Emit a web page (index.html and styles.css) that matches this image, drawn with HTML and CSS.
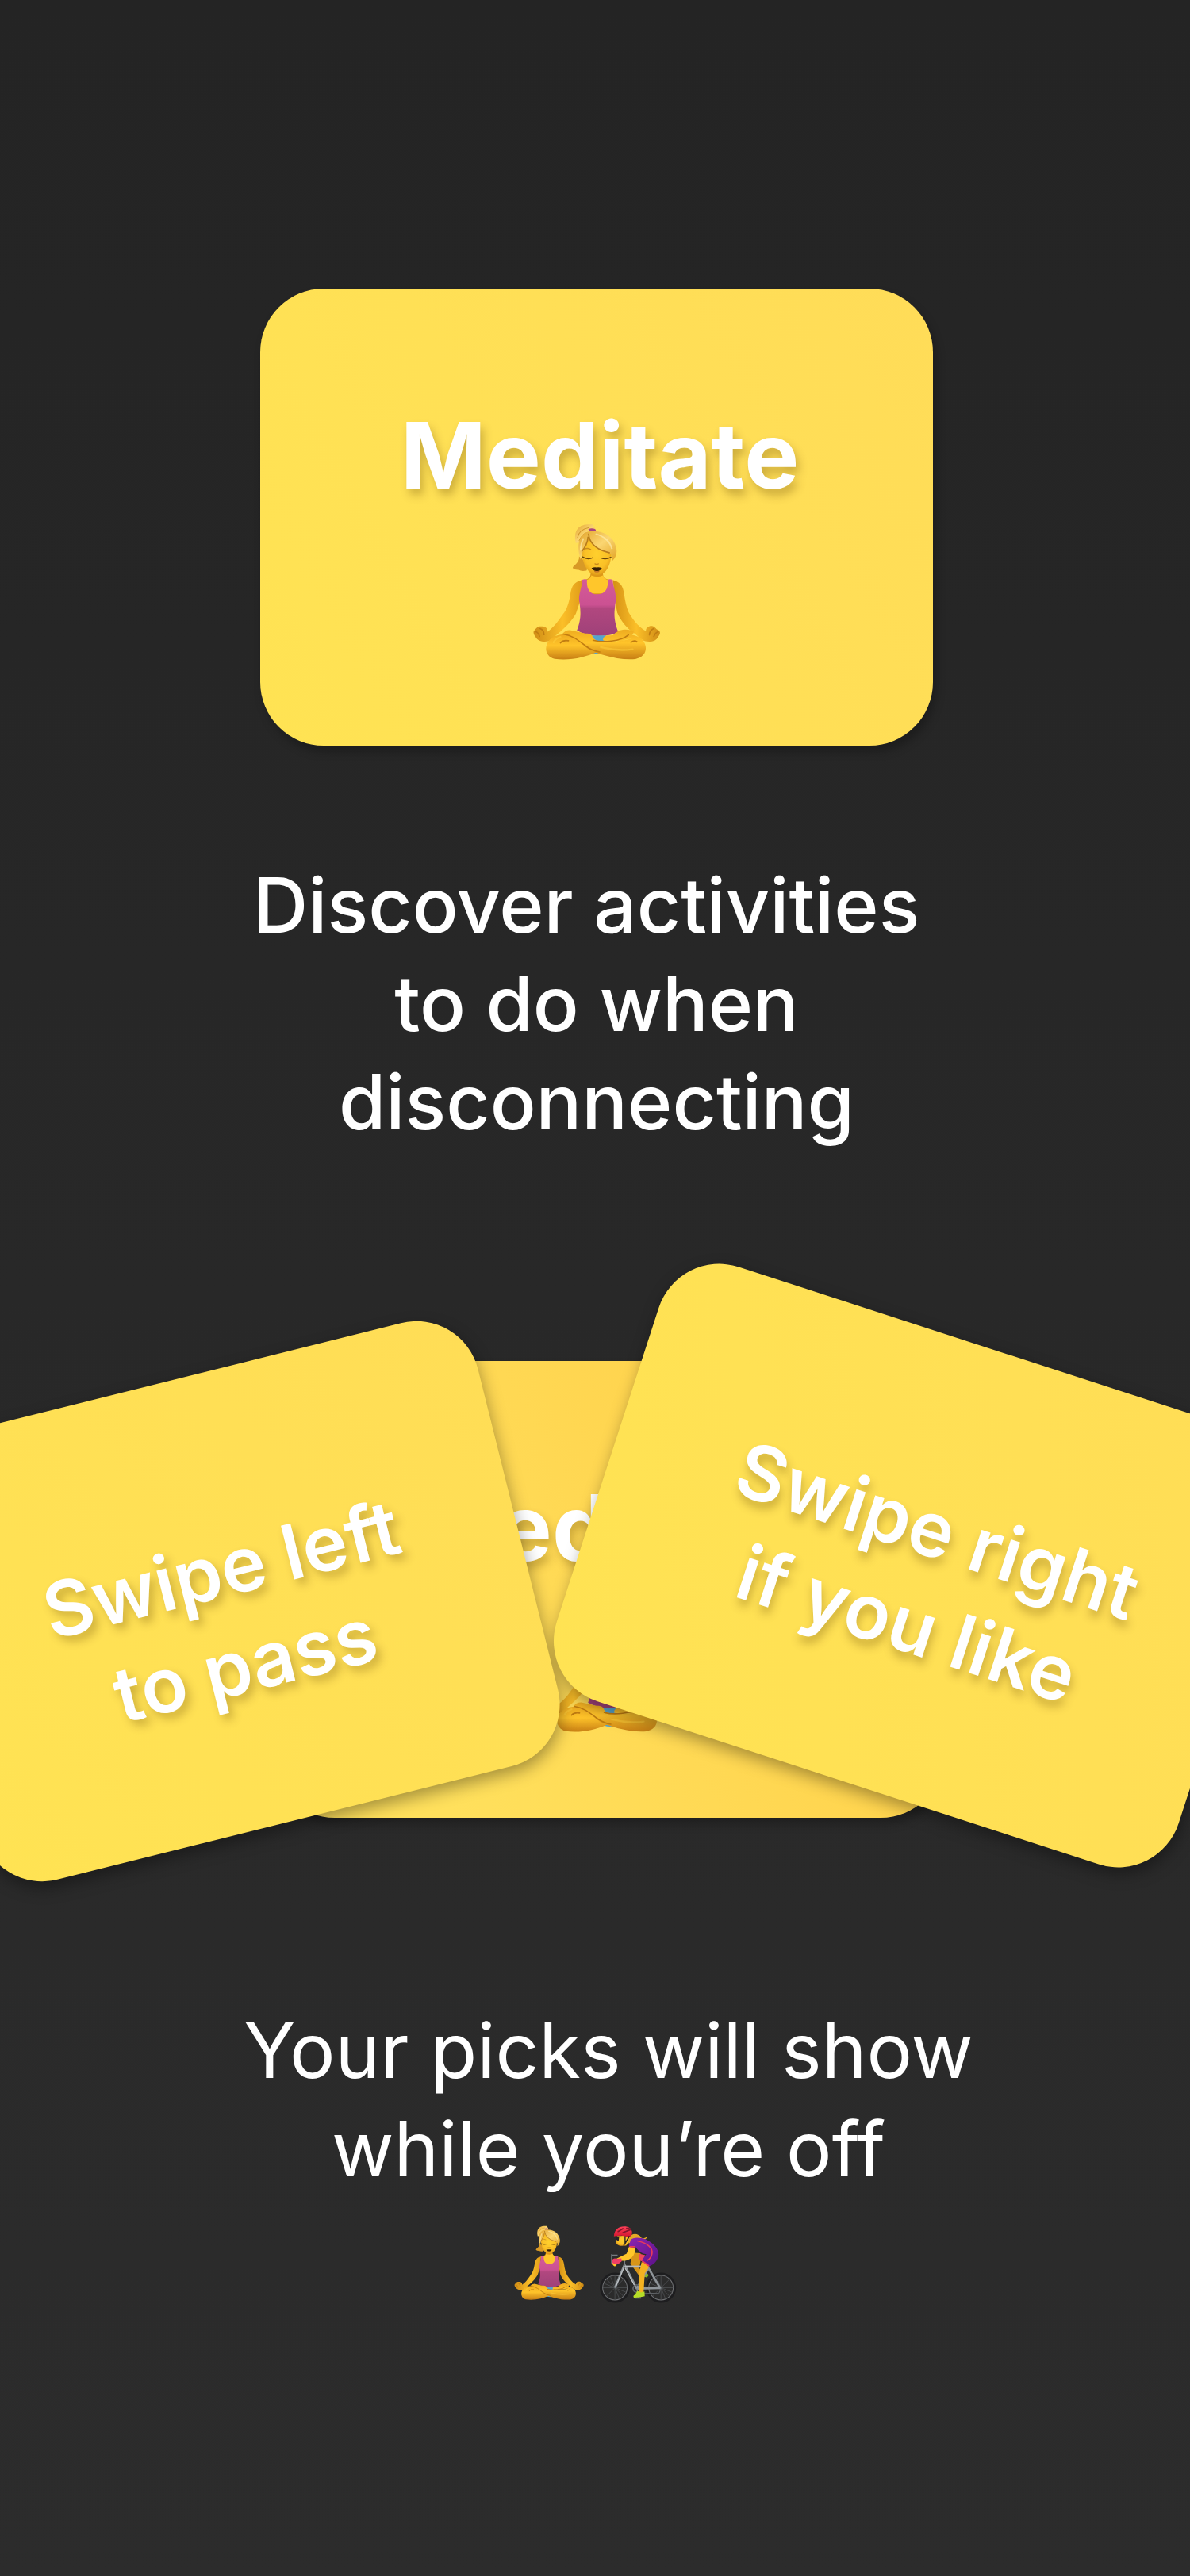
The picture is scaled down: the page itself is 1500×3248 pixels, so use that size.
FILE: index.html
```html
<!DOCTYPE html>
<html lang="en">
<head>
<meta charset="utf-8">
<meta name="viewport" content="width=device-width, initial-scale=1">
<title>Discover activities</title>
<link rel="stylesheet" href="styles.css">
</head>
<body>
<svg class="defs" aria-hidden="true">
  <defs>
    <linearGradient id="hair" x1="0" y1="0" x2="1" y2="1"><stop offset="0" stop-color="#e3a52c"/><stop offset=".5" stop-color="#fbd672"/><stop offset="1" stop-color="#e2a223"/></linearGradient>
    <linearGradient id="top" x1="0" y1="0" x2="0" y2="1"><stop offset="0" stop-color="#d55b98"/><stop offset=".45" stop-color="#cb5192"/><stop offset=".52" stop-color="#b1477f"/><stop offset="1" stop-color="#9f4179"/></linearGradient>
    <linearGradient id="armL" x1="0" y1="0" x2="1" y2="0"><stop offset="0" stop-color="#d08d16"/><stop offset=".6" stop-color="#fbbf28"/><stop offset="1" stop-color="#e09c19"/></linearGradient>
    <linearGradient id="armR" x1="0" y1="0" x2="1" y2="0"><stop offset="0" stop-color="#d49014"/><stop offset=".5" stop-color="#fbbf28"/><stop offset="1" stop-color="#d08d16"/></linearGradient>
    <linearGradient id="leg" x1="0" y1="0" x2="0" y2="1"><stop offset="0" stop-color="#eeab20"/><stop offset=".45" stop-color="#ffc42a"/><stop offset="1" stop-color="#c87f14"/></linearGradient>
    <radialGradient id="face" cx=".5" cy=".45" r=".6"><stop offset="0" stop-color="#ffd02d"/><stop offset=".65" stop-color="#fac026"/><stop offset="1" stop-color="#dc9516"/></radialGradient>
    <linearGradient id="suit" x1="0" y1="0" x2="1" y2="1"><stop offset="0" stop-color="#8b25b0"/><stop offset="1" stop-color="#5b1289"/></linearGradient>
    <linearGradient id="helmet" x1="0" y1="0" x2="0" y2="1"><stop offset="0" stop-color="#ff4058"/><stop offset="1" stop-color="#d3172f"/></linearGradient>
    <symbol id="yoga" viewBox="62 44 484 514">
      <path fill="#d89a26" d="M238 168 C240 195 216 200 214 212 Q222 220 236 219 Q246 226 266 222 L276 200 Z"/>
      <path fill="url(#hair)" d="M226 118 C216 74 234 50 270 48 L288 48 L298 62 C302 70 296 76 284 76 C256 82 244 98 240 116 Z"/>
      <path fill="none" stroke="#d0942a" stroke-width="3" d="M232 98 C236 76 252 64 276 60 M238 110 C246 90 256 80 270 78"/>
      <path fill="#a94580" d="M273 66 Q285 60 299 66 Q304 72 298 75 L278 76 Z"/>
      <path fill="#dd9817" d="M282 226 h46 q-1 20 8 25 q14 7 26 6 l-14 64 h-88 l-14 -64 q22 0 29 -8 q8 -8 7 -23z"/>
      <path fill="#ffc62b" d="M284 240 q24 10 44 0 q2 12 20 18 l-6 50 h-72 l-6 -50 q20 -6 20 -18z"/>
      <path fill="url(#face)" d="M247 138 C246 102 268 92 308 98 C350 105 366 136 359 170 C353 210 336 238 306 238 C274 238 248 200 247 138 Z"/>
      <path fill="url(#hair)" d="M276 74 C334 67 372 98 379 141 C382 164 370 181 361 187 C366 166 358 157 346 154 C306 144 278 123 273 91 C272 122 258 140 247 158 L244 180 C230 143 230 84 276 74 Z"/>
      <path fill="none" stroke="#b87c1c" stroke-width="5" d="M274 82 C276 122 311 145 354 155 M272 94 C270 120 260 134 248 150"/>
      <path fill="none" stroke="#fff0b4" stroke-width="6" opacity=".6" d="M300 84 C336 92 356 116 362 140 M255 100 C245 118 244 132 244 146"/>
      <path fill="none" stroke="#67450c" stroke-width="4" stroke-linecap="round" d="M251 170 Q270 182 290 173 M320 174 Q340 182 358 171"/>
      <path fill="none" stroke="#c98b1c" stroke-width="4" stroke-linecap="round" d="M258 141 Q269 135 282 142 M298 196 Q304 200 311 196"/>
      <path fill="#362005" d="M285 212 Q297 207 304 210 Q312 207 324 212 Q318 224 304 223 Q291 223 285 212Z"/>
      <path fill="none" stroke="#b7642a" stroke-width="3" d="M296 225 Q305 228 314 225"/>
      <path fill="url(#armL)" d="M249 258 C222 264 210 276 205 312 C200 344 191 370 176 388 C158 415 138 440 118 453 C122 436 108 430 88 432 C78 434 76 442 70 447 C62 454 70 466 74 471 C82 488 104 492 122 488 C138 484 146 470 160 458 C184 438 212 410 226 384 L244 330 Z"/>
      <path fill="url(#armR)" d="M366 258 C390 264 404 276 408 312 C413 344 418 368 430 388 C446 414 470 440 490 450 C488 438 500 428 516 431 C526 434 526 442 536 445 C548 452 542 464 536 471 C528 488 508 492 488 488 C470 482 458 466 442 455 C418 438 394 410 382 380 L372 330 Z"/>
      <path fill="none" stroke="#c07d12" stroke-width="5" stroke-linecap="round" d="M91 440 Q106 446 106 463 M76 452 Q86 456 89 470 M519 440 Q504 446 503 464 M536 452 Q525 456 520 470"/>
      <path fill="url(#top)" d="M250 256 Q260 252 268 256 C265 292 280 311 306 311 C334 311 350 292 346 256 Q356 252 365 257 C366 284 377 300 377 330 C370 380 366 400 386 454 Q355 468 307 468 Q260 466 230 447 C248 400 244 370 238 332 C238 302 250 282 250 256 Z"/>
      <path fill="#55a4ce" d="M278 466 H340 L336 485 L340 532 Q310 542 286 532 Z"/>
      <path fill="url(#leg)" d="M280 500 C230 455 160 450 128 482 C104 506 110 546 146 554 C202 562 262 548 306 528 Z"/>
      <path fill="url(#leg)" d="M300 498 C364 470 436 444 476 482 C500 508 492 548 450 555 C390 560 326 540 278 522 Q262 508 240 492 Q220 472 176 460 Q184 446 204 446 L262 459 Q280 456 288 468 C294 484 306 489 350 488 C390 488 420 484 440 474 C424 480 406 484 386 486 L328 484 Q328 470 342 467 L366 465 C384 444 410 440 434 447 Q450 450 440 462 L426 474"/>
      <path fill="none" stroke="#c07c11" stroke-width="5" stroke-linecap="round" d="M178 461 C220 468 236 486 266 508 Q284 522 316 528 M168 494 Q178 482 198 486 M291 484 Q320 492 360 487 Q402 482 424 464 M434 492 Q446 482 456 490"/>
      <path fill="none" stroke="#ffd03b" stroke-width="7" stroke-linecap="round" opacity=".5" d="M142 492 Q150 477 168 472 M320 510 Q380 526 440 518"/>
    </symbol>
    <symbol id="cyclist" viewBox="370 78 292 292">
      <g fill="none" stroke="#1d1d1f" stroke-width="9"><circle cx="430" cy="312" r="52"/><circle cx="603" cy="312" r="52"/></g>
      <g fill="none" stroke="#707275" stroke-width="3"><circle cx="430" cy="312" r="46"/><circle cx="603" cy="312" r="46"/></g>
      <g stroke="#55585b" stroke-width="2"><path d="M430 267v90M385 312h90M398 280l64 64M398 344l64-64M413 270l34 84M388 295l84 34M603 267v90M558 312h90M571 280l64 64M571 344l64-64M586 270l34 84M561 295l84 34"/></g>
      <path fill="#d89519" d="M494 180 L526 182 Q530 210 520 238 L532 246 L520 266 L488 222 Z"/>
      <path fill="#83bd20" d="M544 258 q10 -3 12 8 l-6 8 -10 -4z"/>
      <path fill="none" stroke="#8e9499" stroke-width="8" stroke-linejoin="round" d="M430 312 L466 226 L512 315 L600 313 L556 238 L512 315 M467 233 H548"/>
      <path fill="none" stroke="#c4c8cb" stroke-width="3" d="M467 231 H546 M468 238 L505 306 M432 310 L463 238"/>
      <path fill="none" stroke="#777c80" stroke-width="5" d="M466 230 V210 M418 186 V220 M418 190 H440 M512 315 L520 352 M505 350 H528"/>
      <circle cx="512" cy="315" r="14" fill="none" stroke="#606468" stroke-width="5"/>
      <path fill="none" stroke="#606468" stroke-width="3" d="M518 334 L596 332 L604 312"/>
      <path fill="#ef455c" d="M520 184 L544 190 L534 214 L522 208Z"/>
      <path fill="url(#face)" d="M438 118 L434 140 Q436 154 452 155 L472 154 L488 136 L474 116 Z"/>
      <path fill="#e6a927" d="M482 126 C492 105 518 106 529 124 Q540 130 551 120 Q548 133 532 133 Q512 132 482 146Z"/>
      <path fill="#272126" d="M432 120 H446 L444 135 Q432 136 432 120Z"/>
      <path fill="url(#helmet)" d="M426 119 C428 91 446 80 470 82 C488 84 499 99 493 114 C486 124 470 120 456 116 Q440 116 426 119Z"/>
      <path fill="none" stroke="#84172b" stroke-width="5" stroke-linecap="round" d="M442 101 L460 90 M460 105 L488 94 M474 89 L486 90"/>
      <path fill="none" stroke="#222023" stroke-width="4" d="M468 118 V146 L462 154 M484 118 L468 146"/>
      <path fill="#ffc72a" d="M483 158 L507 162 Q507 184 492 200 Q473 214 450 210 L430 232 Q418 228 421 216 L432 205 L474 184 Z"/>
      <path fill="#f4b221" d="M530 216 L564 220 Q554 244 542 258 L537 338 L520 328 L519 270 Z"/>
      <path fill="url(#suit)" d="M489 132 Q500 121 530 126 C560 132 594 160 594 186 C592 214 572 226 558 232 L530 210 L548 186 Q525 184 508 160 L482 158 Z"/>
      <path fill="none" stroke="#e83b59" stroke-width="5" d="M485 158 H506 M514 136 C553 144 574 164 569 184 Q566 202 550 210 M532 211 L558 230"/>
      <path fill="#ee3f66" d="M420 207 Q424 199 438 203 L454 202 L456 212 L444 222 Q430 226 420 218Z"/>
      <path fill="#b5dd27" d="M514 324 L528 330 L541 326 L542 344 Q520 350 501 349 Q496 342 506 338Z"/>
    </symbol>
  </defs>
</svg>

<main class="page">
  <section class="card">
    <h2 class="card-title">Meditate</h2>
    <svg class="card-emoji" role="img" aria-label="Woman in lotus position"><use href="#yoga"/></svg>
  </section>

  <h1 class="copy copy-discover">Discover activities&nbsp;<br>to do when<br>disconnecting</h1>

  <section class="deck">
    <div class="card card-back">
      <h2 class="card-title">Meditate</h2>
      <svg class="card-emoji" aria-hidden="true"><use href="#yoga"/></svg>
    </div>
    <div class="swipes">
      <div class="swipe swipe-left"><p class="swipe-text">Swipe left<br>to pass</p></div>
      <div class="swipe swipe-right"><p class="swipe-text">Swipe right<br>if you like</p></div>
    </div>
  </section>

  <p class="copy copy-picks">Your picks will show<br>while you’re off</p>
  <div class="picks">
    <svg class="pick-yoga" role="img" aria-label="Woman in lotus position"><use href="#yoga"/></svg>
    <svg class="pick-cyclist" role="img" aria-label="Woman biking"><use href="#cyclist"/></svg>
  </div>
</main>
</body>
</html>
```
FILE: styles.css
```css
* { box-sizing: border-box; }

body {
  margin: 0;
  background: #282828;
  color: #fff;
  font-family: Inter, "Liberation Sans", sans-serif;
  font-variant-ligatures: none;
}

h1, h2, p { margin: 0; }

.defs {
  position: absolute;
  width: 0;
  height: 0;
}

.page {
  display: flex;
  flex-direction: column;
  align-items: center;
  min-height: 100vh;
  padding: 364px 0 344px;
  overflow: hidden;
  background: linear-gradient(#242424, #2c2c2c);
}

.card {
  display: flex;
  flex-direction: column;
  align-items: center;
  width: 848px;
  height: 576px;
  padding-top: 148px;
  margin-left: 4px;
  border-radius: 80px;
  background: linear-gradient(60deg, #ffe353, #ffdc58);
  box-shadow: 4px 8px 12px rgba(0, 0, 0, 0.25);
}

.card-title {
  padding-left: 8px;
  font-size: 116px;
  font-weight: 700;
  line-height: 124px;
  text-shadow: 4px 8px 12px rgba(90, 60, 0, 0.3);
}

.card-emoji {
  width: 162px;
  height: 172px;
  margin-top: 24px;
}

.copy {
  font-size: 96px;
  line-height: 124px;
  text-align: center;
}

.copy-discover {
  margin: 139px 0 265px;
  padding-left: 4px;
  font-weight: 500;
}

/* The back card sits in the flow; the two swipe cards are laid over it. */
.deck {
  position: relative;
  display: flex;
  justify-content: center;
  width: 100%;
}

.card-back {
  margin-left: 32px;
  background: linear-gradient(60deg, #ffe05c 20%, #ffd14b 80%);
}

.swipes {
  position: absolute;
  inset: 0;
  filter: drop-shadow(2px 8px 10px rgba(0, 0, 0, 0.35));
}

.swipe {
  position: absolute;
  height: 576px;
  border-radius: 80px;
  background: linear-gradient(60deg, #ffe353, #ffdd56);
}

.swipe-left {
  top: 15px;
  left: calc(50% - 836px);
  width: 750px;
  padding-top: 184px;
  transform: rotate(-14deg);
}

.swipe-right {
  top: -30px;
  left: calc(50% - 4px);
  width: 824px;
  padding: 176px 0 0 18px;
  transform: rotate(18deg);
}

.swipe-text {
  font-size: 96px;
  font-weight: 600;
  line-height: 124px;
  text-align: center;
  text-shadow: 4px 8px 12px rgba(90, 60, 0, 0.3);
}

.copy-picks {
  margin-top: 231px;
  padding-left: 34px;
  font-weight: 400;
}

.picks {
  display: flex;
  gap: 18px;
  margin-top: 35px;
}

.pick-yoga {
  width: 90px;
  height: 94px;
}

.pick-cyclist {
  width: 98px;
  height: 98px;
}
```
